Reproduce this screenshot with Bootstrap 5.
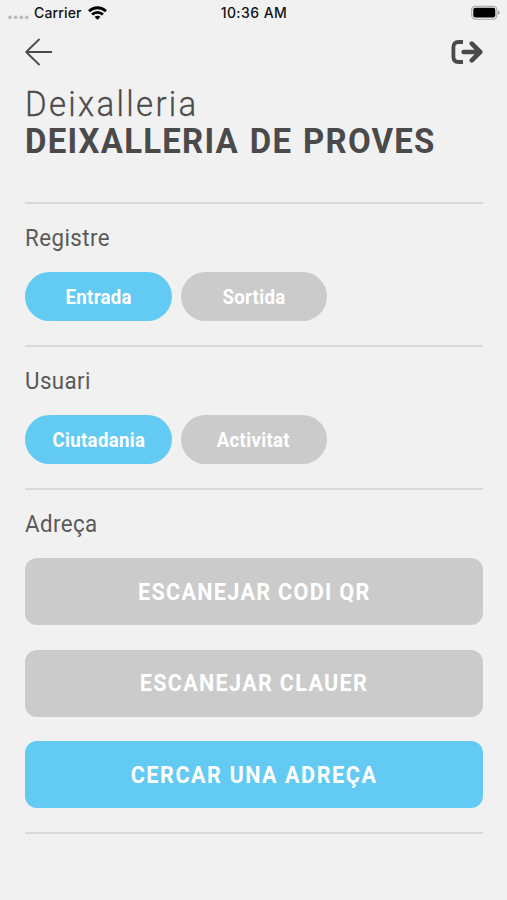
<!DOCTYPE html>
<html lang="ca">
<head>
<meta charset="utf-8">
<meta name="viewport" content="width=device-width, initial-scale=1">
<title>Deixalleria</title>
<link href="https://cdn.jsdelivr.net/npm/bootstrap@5.3.0/dist/css/bootstrap.min.css" rel="stylesheet">
<style>
body{background:#f1f1f1;color:#4a4a4a;font-family:Roboto,"Liberation Sans",sans-serif}
svg{display:block}
.statusbar{height:26px;padding:0 7px 0 8px;color:#111;font:500 14px/26px Inter,sans-serif;display:grid;grid-template-columns:1fr auto 1fr}
.carrier{letter-spacing:.15px;margin:0 6px 0 5px}
.clock{letter-spacing:.45px}
.topnav{height:52px;padding:0 24px}
.screen{padding:0 24.5px 0 25.3px}
.titles{height:124px;padding-top:8px}
/* Narrow lettering for headings and buttons */
.narrow{display:inline-block;transform:scaleX(.93);transform-origin:left;white-space:nowrap}
.btn .narrow{transform-origin:center}
.place-kind{font-size:35.5px;line-height:37px;font-weight:300;letter-spacing:2.5px;-webkit-text-stroke:.3px #4a4a4a}
.place-name{font-size:35.5px;line-height:36px;font-weight:700;letter-spacing:1.3px;word-spacing:1.5px}
.block{border-top:2px solid #d9d9d9;height:143px;padding-top:18px}
.block-last{height:346px;border-bottom:2px solid #d9d9d9}
.block-title{font-size:24px;line-height:32px;font-weight:400;margin-bottom:18px;letter-spacing:.45px;color:#5a5a5a}
.choices{gap:9px}
.btn-choice,.btn-wide{border:0;padding:0;color:#fff;background:#cbcbcb;font-weight:700}
.btn-choice{width:146.3px;height:49px;font-size:20px;letter-spacing:.35px}
.wide-list{gap:24.5px}
.btn-wide{height:67px;border-radius:12px;font-size:24px;letter-spacing:1.45px}
.btn-wide .narrow{transform:scaleX(.9)}
.btn-wide.on{letter-spacing:1.7px}
.btn.on{background:#63caf3}
</style>
</head>
<body>
<div class="statusbar">
  <div class="d-flex align-items-center">
    <svg width="21" height="26" fill="#bcbcbc"><circle cx="2" cy="17.3" r="1.9"/><circle cx="7.6" cy="17.3" r="1.9"/><circle cx="13.2" cy="17.3" r="1.9"/><circle cx="18.8" cy="17.3" r="1.9"/></svg>
    <span class="carrier">Carrier</span>
    <svg width="19" height="26" viewBox="0 0 19 26" fill="none" stroke="#000" stroke-width="2.8"><path d="M1 11.2a12.2 12.2 0 0 1 17 0M4.1 14.6a7.8 7.8 0 0 1 10.8 0"/><path d="M9.5 19.8l-2.9-2.9a4 4 0 0 1 5.8 0z" fill="#000" stroke="none"/></svg>
  </div>
  <span class="clock">10:36 AM</span>
  <div class="d-flex justify-content-end">
    <svg width="29" height="26" viewBox="0 0 29 26"><rect x=".7" y="6.2" width="25.2" height="13" rx="3.6" fill="none" stroke="#a4a4a4" stroke-width="1.1"/><rect x="2.3" y="7.8" width="22" height="9.8" rx="2" fill="#000"/><path d="M27 10.6q1.8.5 1.8 2.1t-1.8 2.1z" fill="#a4a4a4"/></svg>
  </div>
</div>
<nav class="topnav d-flex align-items-center justify-content-between">
  <svg width="29" height="30" viewBox="0 0 29 30" fill="none" stroke="#4a4a4a" stroke-width="1.8" stroke-linecap="round" stroke-linejoin="round"><path d="M27.3 15H2.2M15 2.5L2.2 15 15 27.5"/></svg>
  <svg width="33" height="26" viewBox="0 0 33 26" fill="none" stroke="#4a4a4a" stroke-width="4.6" stroke-linecap="round"><path d="M13 3H8.5Q3.4 3 3.4 8.2v9.6Q3.4 23 8.5 23H13" stroke-width="3.8" stroke-linecap="butt"/><path d="M13.7 13H28M21.8 4.6L30.2 13l-8.4 8.4" stroke-linejoin="round"/></svg>
</nav>
<main class="screen">
  <header class="titles">
    <div class="place-kind"><span class="narrow">Deixalleria</span></div>
    <h1 class="place-name mb-0"><span class="narrow">DEIXALLERIA DE PROVES</span></h1>
  </header>
  <section class="block">
    <h2 class="block-title"><span class="narrow">Registre</span></h2>
    <div class="choices d-flex">
      <button class="btn btn-choice on rounded-pill"><span class="narrow">Entrada</span></button>
      <button class="btn btn-choice rounded-pill"><span class="narrow">Sortida</span></button>
    </div>
  </section>
  <section class="block">
    <h2 class="block-title"><span class="narrow">Usuari</span></h2>
    <div class="choices d-flex">
      <button class="btn btn-choice on rounded-pill"><span class="narrow">Ciutadania</span></button>
      <button class="btn btn-choice rounded-pill"><span class="narrow">Activitat</span></button>
    </div>
  </section>
  <section class="block block-last">
    <h2 class="block-title"><span class="narrow">Adreça</span></h2>
    <div class="wide-list d-flex flex-column">
      <button class="btn btn-wide w-100"><span class="narrow">ESCANEJAR CODI QR</span></button>
      <button class="btn btn-wide w-100"><span class="narrow">ESCANEJAR CLAUER</span></button>
      <button class="btn btn-wide on w-100"><span class="narrow">CERCAR UNA ADREÇA</span></button>
    </div>
  </section>
</main>
<script src="https://cdn.jsdelivr.net/npm/bootstrap@5.3.0/dist/js/bootstrap.bundle.min.js"></script>
</body>
</html>
